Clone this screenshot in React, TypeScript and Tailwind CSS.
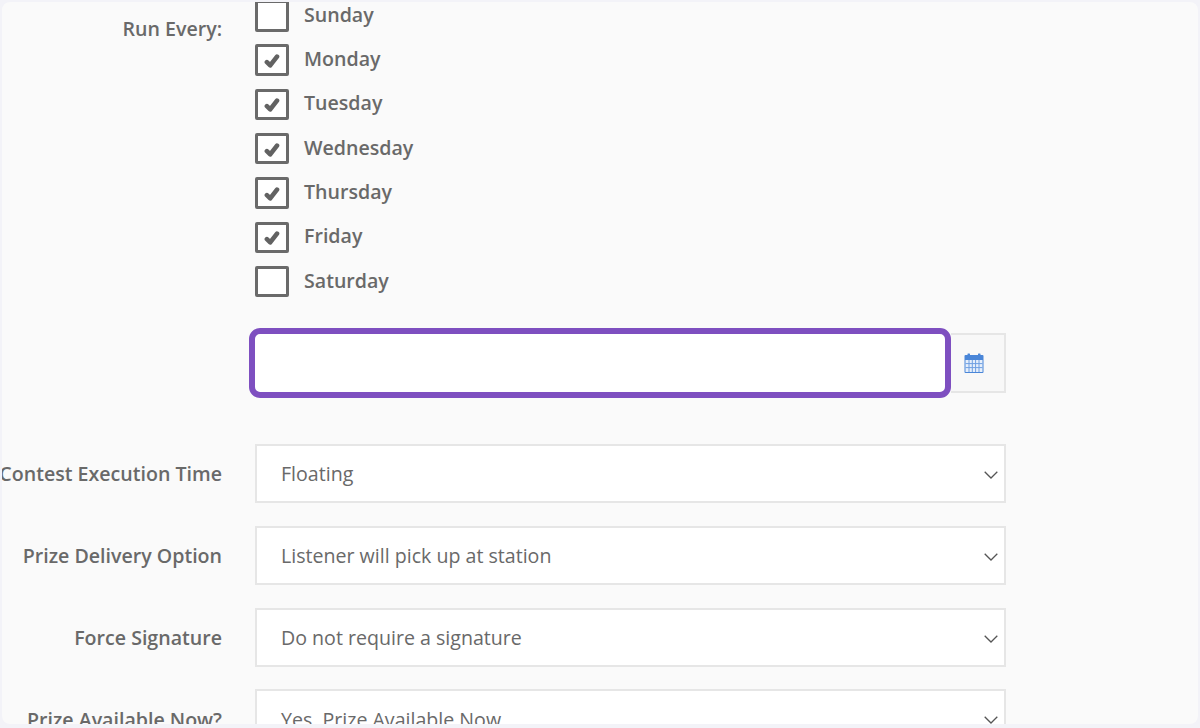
const days = [
  { name: "Sunday", checked: false },
  { name: "Monday", checked: true },
  { name: "Tuesday", checked: true },
  { name: "Wednesday", checked: true },
  { name: "Thursday", checked: true },
  { name: "Friday", checked: true },
  { name: "Saturday", checked: false },
];

const selects = [
  { label: "Contest Execution Time", value: "Floating" },
  { label: "Prize Delivery Option", value: "Listener will pick up at station" },
  { label: "Force Signature", value: "Do not require a signature" },
  { label: "Prize Available Now?", value: "Yes, Prize Available Now" },
];

const CheckMark = () => (
  <svg width="16" height="16" viewBox="0 0 16 16" className="mt-[2px] text-[#626262]">
    <path d="M2.9 9.2 L6.2 12.4 L13 3.6" fill="none" stroke="currentColor" strokeWidth="4.6" strokeLinejoin="round" strokeLinecap="round" />
  </svg>
);

const CalendarIcon = () => (
  <svg width="20" height="20" viewBox="0 0 20 20">
    <rect x="0.5" y="2" width="19" height="18" rx="1" fill="#4a86d8" />
    <rect x="3.5" y="0.5" width="2.5" height="3" rx="0.5" fill="#4a86d8" />
    <rect x="14" y="0.5" width="2.5" height="3" rx="0.5" fill="#4a86d8" />
    <rect x="1.5" y="7" width="17" height="12" fill="#e6effb" />
    <path d="M5 7v12M8.3 7v12M11.6 7v12M15 7v12M1.5 10.6h17M1.5 14.6h17" stroke="#6f9fe2" strokeWidth="1" />
  </svg>
);

const Chevron = () => (
  <svg width="14" height="8" viewBox="0 0 14 8" className="mt-[3px] text-[#555555]">
    <path d="M0.7 0.8 L7 7 L13.3 0.8" fill="none" stroke="currentColor" strokeWidth="1.3" />
  </svg>
);

export default function App() {
  return (
    <div className="h-[728px] w-[1200px] overflow-hidden bg-[#f3f3f8] font-['Open_Sans',sans-serif]">
      <div className="h-[726px] overflow-hidden rounded-[10px] border-2 border-[#f3f3f8] bg-[#fafafa]">
        {/* day checkboxes */}
        <div className="mt-[-2px] flex">
          <div className="w-[220px] shrink-0 pt-[16px] text-right text-[19.6px] font-semibold leading-[26px] text-[#696969]">
            Run Every:
          </div>
          <div className="ml-[33px] flex flex-col gap-[12.83px]">
            {days.map((day) => (
              <div key={day.name} className="flex h-[31.5px] items-center">
                <div className="flex h-[31.5px] w-[33.5px] items-center justify-center rounded-[2px] border-[3px] border-[#6a6a6a] bg-white">
                  {day.checked && <CheckMark />}
                </div>
                <span className="ml-[15.5px] mt-[-2px] text-[19.6px] font-semibold leading-[26px] text-[#696969]">
                  {day.name}
                </span>
              </div>
            ))}
          </div>
        </div>

        {/* date field */}
        <div className="ml-[247px] mt-[30.5px] flex w-[757px] items-center">
          <div className="h-[70px] w-[702px] shrink-0 rounded-[11px] border-[6px] border-[#7e4fc0] bg-white" />
          <div className="flex h-[60px] flex-1 items-center border-2 border-l-0 border-[#e6e6e6] bg-[#f8f8f8] pl-[13px]">
            <CalendarIcon />
          </div>
        </div>

        {/* selects */}
        <div className="mt-[46px] flex flex-col gap-[22.8px]">
          {selects.map((row) => (
            <div key={row.label} className="flex items-center">
              <div className="flex w-[220px] shrink-0 justify-end whitespace-nowrap text-[19.6px] font-semibold leading-[26px] text-[#696969]">
                <span className="mt-[2px] shrink-0">{row.label}</span>
              </div>
              <div className="ml-[33px] flex h-[59px] w-[751px] items-center justify-between border-2 border-[#e6e6e6] bg-white pl-[24px] pr-[6px]">
                <span className="mt-[2px] text-[19.6px] leading-[26px] text-[#696969]">{row.value}</span>
                <Chevron />
              </div>
            </div>
          ))}
        </div>
      </div>
    </div>
  );
}
